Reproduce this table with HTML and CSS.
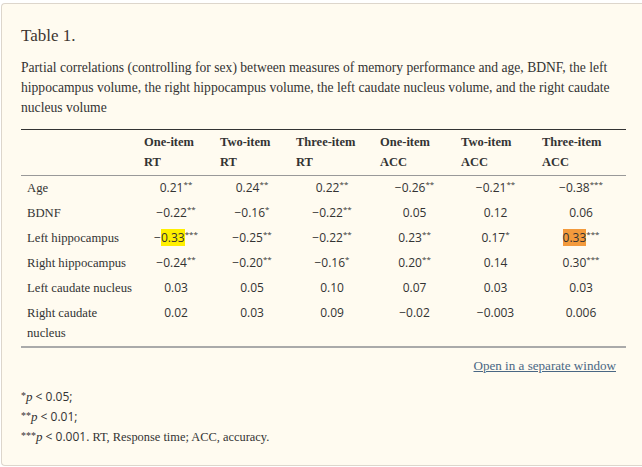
FILE: index.html
```html
<!DOCTYPE html>
<html>
<head>
<meta charset="utf-8">
<link rel="stylesheet" href="styles.css">
</head>
<body>
<div class="card">
  <h3 class="title">Table 1.</h3>
  <p class="caption">Partial correlations (controlling for sex) between measures of memory performance and age, BDNF, the left hippocampus volume, the right hippocampus volume, the left caudate nucleus volume, and the right caudate nucleus volume</p>
  <table class="data">
    <colgroup>
      <col class="c-label"><col class="c-76"><col class="c-76"><col class="c-84"><col class="c-81"><col class="c-81"><col class="c-last">
    </colgroup>
    <thead>
      <tr><th></th><th>One-item RT</th><th>Two-item RT</th><th>Three-item RT</th><th>One-item ACC</th><th>Two-item ACC</th><th>Three-item ACC</th></tr>
    </thead>
    <tbody>
      <tr><td class="lab">Age</td><td>0.21<sup>**</sup></td><td>0.24<sup>**</sup></td><td>0.22<sup>**</sup></td><td>−0.26<sup>**</sup></td><td>−0.21<sup>**</sup></td><td>−0.38<sup>***</sup></td></tr>
      <tr><td class="lab">BDNF</td><td>−0.22<sup>**</sup></td><td>−0.16<sup>*</sup></td><td>−0.22<sup>**</sup></td><td>0.05</td><td>0.12</td><td>0.06</td></tr>
      <tr><td class="lab">Left hippocampus</td><td>−<span class="hl-y">0.33</span><sup>***</sup></td><td>−0.25<sup>**</sup></td><td>−0.22<sup>**</sup></td><td>0.23<sup>**</sup></td><td>0.17<sup>*</sup></td><td><span class="hl-o">0.33</span><sup>***</sup></td></tr>
      <tr><td class="lab">Right hippocampus</td><td>−0.24<sup>**</sup></td><td>−0.20<sup>**</sup></td><td>−0.16<sup>*</sup></td><td>0.20<sup>**</sup></td><td>0.14</td><td>0.30<sup>***</sup></td></tr>
      <tr><td class="lab">Left caudate nucleus</td><td>0.03</td><td>0.05</td><td>0.10</td><td>0.07</td><td>0.03</td><td>0.03</td></tr>
      <tr><td class="lab">Right caudate nucleus</td><td>0.02</td><td>0.03</td><td>0.09</td><td>−0.02</td><td>−0.003</td><td>0.006</td></tr>
    </tbody>
  </table>
  <div class="linkrow"><a class="open" href="#">Open in a separate window</a></div>
  <div class="notes">
    <div class="note"><span class="ast">*</span><i>p</i> <span class="num">&lt; 0.05;</span></div>
    <div class="note"><span class="ast">**</span><i>p</i> <span class="num">&lt; 0.01;</span></div>
    <div class="note"><span class="ast">***</span><i>p</i> <span class="num">&lt; 0.001.</span> RT, Response time; ACC, accuracy.</div>
  </div>
</div>
</body>
</html>
```

FILE: styles.css
```css
html, body {
  margin: 0;
  padding: 0;
  background: #ffffff;
  overflow: hidden;
}
body {
  width: 642px;
  height: 467px;
  font-family: "Liberation Serif", "DejaVu Serif", serif;
  color: #333;
}
.card {
  box-sizing: border-box;
  margin: 3px 0 0 1px;
  width: 641px;
  height: 463px;
  border: 1px solid #ddd6cc;
  border-right: none;
  border-radius: 4px 0 0 4px;
  background: #fffbf0;
  padding: 20px 0 0 19px;
}
.title {
  margin: 0;
  font-weight: normal;
  font-size: 17px;
  line-height: 24px;
  color: #3d3530;
}
.caption {
  margin: 10px 0 0 0;
  width: 600px;
  font-size: 13.6px;
  line-height: 20px;
  color: #333;
}
.data {
  margin-top: 11px;
  width: 605px;
  border-collapse: collapse;
  table-layout: fixed;
  border-top: 1px solid #333;
  border-bottom: 2px solid #aaa;
  font-size: 12.5px;
}
.c-label { width: 117px; }
.c-76 { width: 76px; }
.c-84 { width: 84px; }
.c-81 { width: 81px; }
.c-last { width: 90px; }
.data thead th {
  text-align: left;
  font-weight: bold;
  line-height: 20px;
  padding: 2px 6px 3px 6px;
  border-bottom: 1px solid #999;
  vertical-align: top;
  color: #333;
}
.data td {
  line-height: 20px;
  padding: 2px 6px 3px 6px;
  vertical-align: top;
  text-align: center;
  font-family: "Open Sans", "DejaVu Sans", sans-serif;
  font-size: 12px;
  color: #333;
}
.data td.lab {
  text-align: left;
  font-family: "Liberation Serif", "DejaVu Serif", serif;
  font-size: 12.7px;
}
.data sup {
  font-size: 8px;
  line-height: 0;
  vertical-align: 5px;
}
.hl-y { background: #ffef00; }
.hl-o { background: #f39a3c; }
.linkrow {
  width: 595px;
  margin-top: 8px;
  text-align: right;
  line-height: 20px;
  font-size: 13.1px;
}
.open {
  color: #4a6784;
  text-decoration: underline;
}
.notes {
  margin-top: 11px;
}
.note {
  font-size: 12.4px;
  line-height: 20px;
}
.note i {
  font-size: 13px;
}
.ast {
  font-size: 10px;
  vertical-align: 2px;
  line-height: 0;
}
.num {
  font-family: "Open Sans", "DejaVu Sans", sans-serif;
  font-size: 12px;
}
```
